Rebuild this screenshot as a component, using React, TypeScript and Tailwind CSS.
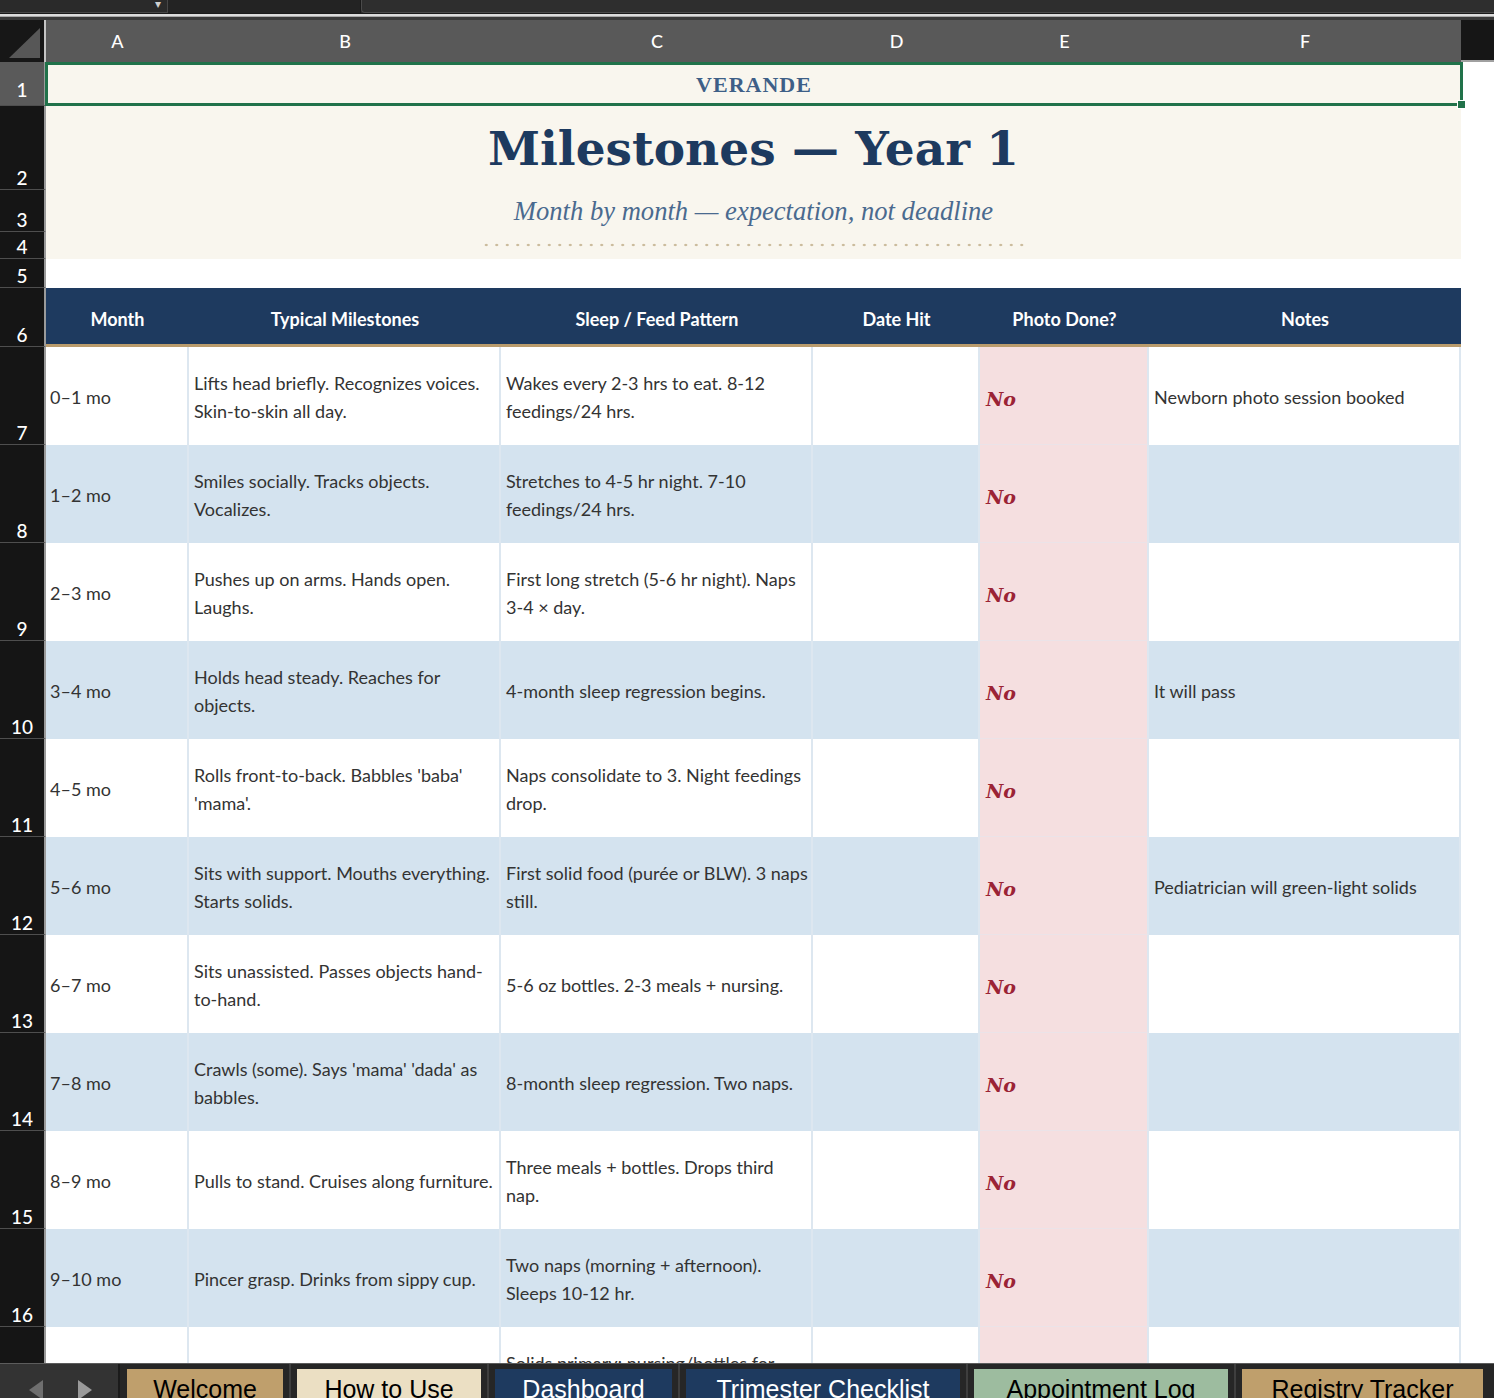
import React from "react";

const COLW = ["w-[143px]", "w-[312px]", "w-[312px]", "w-[167px]", "w-[169px]", "w-[312px]"];
const LETTERS = ["A", "B", "C", "D", "E", "F"];

type Row = { n: number; a: string; b: string[]; c: string[]; f: string };

const rows: Row[] = [
  { n: 7, a: "0–1 mo", b: ["Lifts head briefly. Recognizes voices.", "Skin-to-skin all day."], c: ["Wakes every 2-3 hrs to eat. 8-12", "feedings/24 hrs."], f: "Newborn photo session booked" },
  { n: 8, a: "1–2 mo", b: ["Smiles socially. Tracks objects.", "Vocalizes."], c: ["Stretches to 4-5 hr night. 7-10", "feedings/24 hrs."], f: "" },
  { n: 9, a: "2–3 mo", b: ["Pushes up on arms. Hands open.", "Laughs."], c: ["First long stretch (5-6 hr night). Naps", "3-4 × day."], f: "" },
  { n: 10, a: "3–4 mo", b: ["Holds head steady. Reaches for", "objects."], c: ["4-month sleep regression begins."], f: "It will pass" },
  { n: 11, a: "4–5 mo", b: ["Rolls front-to-back. Babbles 'baba'", "'mama'."], c: ["Naps consolidate to 3. Night feedings", "drop."], f: "" },
  { n: 12, a: "5–6 mo", b: ["Sits with support. Mouths everything.", "Starts solids."], c: ["First solid food (purée or BLW). 3 naps", "still."], f: "Pediatrician will green-light solids" },
  { n: 13, a: "6–7 mo", b: ["Sits unassisted. Passes objects hand-", "to-hand."], c: ["5-6 oz bottles. 2-3 meals + nursing."], f: "" },
  { n: 14, a: "7–8 mo", b: ["Crawls (some). Says 'mama' 'dada' as", "babbles."], c: ["8-month sleep regression. Two naps."], f: "" },
  { n: 15, a: "8–9 mo", b: ["Pulls to stand. Cruises along furniture."], c: ["Three meals + bottles. Drops third", "nap."], f: "" },
  { n: 16, a: "9–10 mo", b: ["Pincer grasp. Drinks from sippy cup."], c: ["Two naps (morning + afternoon).", "Sleeps 10-12 hr."], f: "" },
];

const sans = { fontFamily: "Lato, 'Open Sans', sans-serif" };

function RowHead({ n, h, sel = false, pb = "pb-0" }: { n?: number; h: string; sel?: boolean; pb?: string }) {
  return (
    <div
      className={`${h} w-[46px] shrink-0 flex items-end justify-center ${pb} border-r-2 border-b border-r-[#9a9a9a] border-b-[#4e4e4e] ${sel ? "bg-[#5a5a5a]" : "bg-[#151515]"} text-white text-[19px] leading-[22px] font-medium box-border`}
      style={sans}
    >
      {n ?? ""}
    </div>
  );
}

function Lines({ lines }: { lines: string[] }) {
  return (
    <div className="pt-[2px]">
      {lines.map((l, i) => (
        <div key={i} className="whitespace-nowrap">{l}</div>
      ))}
    </div>
  );
}

function DataRow({ r, idx }: { r: Row; idx: number }) {
  const bg = idx % 2 === 0 ? "bg-white" : "bg-[#d4e3ef]";
  const cell = `shrink-0 h-full flex items-center pl-[4px] border-r-2 border-[#dde7f0] box-border`;
  return (
    <div className="flex h-[98px] shrink-0">
      <RowHead n={r.n} h="h-[98px]" />
      <div className={`flex h-full ${bg} text-[18px] leading-[28px] text-[#333333]`} style={sans}>
        <div className={`${COLW[0]} ${cell}`}><Lines lines={[r.a]} /></div>
        <div className={`${COLW[1]} ${cell} pl-[5px]`}><Lines lines={r.b} /></div>
        <div className={`${COLW[2]} ${cell} pl-[5px]`}><Lines lines={r.c} /></div>
        <div className={`${COLW[3]} ${cell}`}></div>
        <div className={`${COLW[4]} ${cell} bg-[#f5dfe0] pl-[6px] border-b border-b-[#ebe3e8]`}>
          <span
            className="text-[19px] font-bold italic text-[#9b2335] pt-[6px]"
            style={{ fontFamily: "'DejaVu Serif', serif" }}
          >
            No
          </span>
        </div>
        <div className={`${COLW[5]} ${cell} pl-[5px]`}><Lines lines={r.f ? [r.f] : []} /></div>
      </div>
      <div className="flex-1 bg-white" />
    </div>
  );
}

export default function App() {
  return (
    <div className="w-[1494px] h-[1398px] flex flex-col overflow-hidden bg-white">
      {/* formula bar strip */}
      <div className="h-[20px] shrink-0 flex flex-col bg-[#1e1e1e]">
        <div className="h-[13px] flex bg-[#2c2c2c]">
          <div className="w-[168px] h-full bg-[#2a2a2a] border-r border-b border-[#474747] relative overflow-hidden">
            <span className="absolute right-[6px] top-[-5px] text-[12px] text-[#cfcfcf]">▾</span>
          </div>
          <div className="w-[193px] h-full bg-[#232323] border-r border-[#1a1a1a]" />
          <div className="flex-1 h-full bg-[#2e2e2e] border-l border-b border-[#4a4a4a] rounded-bl-[4px]" />
        </div>
        <div className="h-[1px] bg-[#1a1a1a]" />
        <div className="h-[2px] bg-[#dcdcdc]" />
        <div className="h-[1px] bg-[#a8a8a8]" />
        <div className="h-[3px] bg-[#3a3a3a]" />
      </div>

      {/* sheet */}
      <div className="flex-1 flex flex-col overflow-hidden">
        {/* column header */}
        <div className="h-[42px] shrink-0 flex">
          <div className="w-[46px] h-full bg-[#171717] border-r-2 border-[#c4c4c4] box-border relative">
            <svg className="absolute left-[9px] top-[8px]" width="31" height="30" viewBox="0 0 31 30">
              <polygon points="31,0 31,30 0,30" fill="#575757" />
            </svg>
          </div>
          {LETTERS.map((l, i) => (
            <div
              key={l}
              className={`${COLW[i]} shrink-0 h-full bg-[#595959] flex items-center justify-center text-white text-[18px] font-medium`}
              style={sans}
            >
              {l}
            </div>
          ))}
          <div className="flex-1 h-full bg-[#161616] border-b-2 border-[#a0a0a0] box-border" />
        </div>

        {/* rows 1-4: title band */}
        <div className="flex shrink-0">
          <div className="flex flex-col">
            <RowHead n={1} h="h-[44px]" sel pb="pb-[4px]" />
            <RowHead n={2} h="h-[84px]" />
            <RowHead n={3} h="h-[42px]" />
            <RowHead n={4} h="h-[27px]" />
          </div>
          <div className="w-[1415px] shrink-0 flex flex-col bg-[#f9f6ee]">
            <div className="h-[44px] w-[1418px] -ml-[1px] border-[3px] border-[#21724a] box-border flex items-center justify-center relative">
              <span
                className="text-[22px] font-bold tracking-[1px] text-[#3e5f87]"
                style={{ fontFamily: "'Liberation Serif', serif" }}
              >
                VERANDE
              </span>
              <div className="absolute right-[-6px] bottom-[-6px] w-[9px] h-[9px] bg-[#21724a] border border-white" />
            </div>
            <div className="h-[153px] flex flex-col items-center pt-[13px]">
              <div
                className="text-[47px] leading-[60px] font-bold text-[#1d3a5f] whitespace-nowrap"
                style={{ fontFamily: "'DejaVu Serif', serif" }}
              >
                Milestones — Year 1
              </div>
              <div
                className="mt-[16px] text-[26.6px] leading-[32px] italic text-[#4a6a8f] whitespace-nowrap"
                style={{ fontFamily: "'Liberation Serif', serif" }}
              >
                Month by month — expectation, not deadline
              </div>
              <div className="mt-[16px] h-[4px] w-[546px] bg-[radial-gradient(circle,#c9b999_1px,transparent_1.6px)] bg-[length:10.5px_4px]" />
            </div>
          </div>
          <div className="flex-1 bg-white" />
        </div>

        {/* row 5 */}
        <div className="flex h-[29px] shrink-0">
          <RowHead n={5} h="h-[29px]" />
          <div className="flex-1 bg-white" />
        </div>

        {/* row 6 header */}
        <div className="flex h-[59px] shrink-0">
          <RowHead n={6} h="h-[59px]" />
          <div className="flex h-full bg-[#1e3a5f] border-b-[3px] border-[#b99b6c] box-border text-white text-[18px] font-bold" style={sans}>
            {["Month", "Typical Milestones", "Sleep / Feed Pattern", "Date Hit", "Photo Done?", "Notes"].map((t, i) => (
              <div key={t} className={`${COLW[i]} shrink-0 h-full flex items-center justify-center pt-[7px]`}>
                {t}
              </div>
            ))}
          </div>
          <div className="flex-1 bg-white" />
        </div>

        {rows.map((r, i) => (
          <DataRow key={r.n} r={r} idx={i} />
        ))}

        {/* row 17 partial */}
        <div className="flex h-[98px] shrink-0">
          <RowHead h="h-[98px]" />
          <div className="flex h-full bg-white text-[18px] leading-[28px] text-[#333333]" style={sans}>
            <div className={`${COLW[0]} shrink-0 h-full border-r-2 border-[#dde7f0]`} />
            <div className={`${COLW[1]} shrink-0 h-full border-r-2 border-[#dde7f0]`} />
            <div className={`${COLW[2]} shrink-0 h-full border-r-2 border-[#dde7f0] flex items-center pl-[5px]`}>
              <Lines lines={["Solids primary; nursing/bottles for", "comfort."]} />
            </div>
            <div className={`${COLW[3]} shrink-0 h-full border-r-2 border-[#dde7f0]`} />
            <div className={`${COLW[4]} shrink-0 h-full border-r-2 border-[#dde7f0] bg-[#f5dfe0]`} />
            <div className={`${COLW[5]} shrink-0 h-full border-r-2 border-[#dde7f0]`} />
          </div>
          <div className="flex-1 bg-white" />
        </div>
      </div>

      {/* sheet tabs */}
      <div className="h-[35px] shrink-0 flex bg-[#262626] border-t border-[#5c5c5c]" style={{ fontFamily: "'Liberation Sans', Arial, sans-serif" }}>
        <div className="w-[120px] shrink-0 h-full bg-[#333333] border-r-2 border-[#1b1b1b] relative">
          <svg className="absolute left-[29px] top-[16px]" width="16" height="20" viewBox="0 0 16 20">
            <polygon points="14,0 14,20 0,10" fill="#6f6f6f" />
          </svg>
          <svg className="absolute left-[76px] top-[16px]" width="16" height="20" viewBox="0 0 16 20">
            <polygon points="2,0 2,20 16,10" fill="#9a9a9a" />
          </svg>
        </div>
        <div className="flex h-full pl-[7px] gap-[14px]">
          {[
            { t: "Welcome", w: "w-[156px]", c: "bg-[#bf9f6c] text-black" },
            { t: "How to Use", w: "w-[184px]", c: "bg-[#ebdfc3] text-black" },
            { t: "Dashboard", w: "w-[177px]", c: "bg-[#1e3a5f] text-white" },
            { t: "Trimester Checklist", w: "w-[274px]", c: "bg-[#1e3a5f] text-white" },
            { t: "Appointment Log", w: "w-[254px]", c: "bg-[#9dbc9f] text-black" },
            { t: "Registry Tracker", w: "w-[241px]", c: "bg-[#bf9f6c] text-black" },
          ].map((tab, i) => (
            <div key={tab.t} className="relative h-full">
              {i > 0 && <div className="absolute left-[-8px] top-0 h-full w-[2px] bg-[#3e3e3e]" />}
              <div className={`${tab.w} ${tab.c} mt-[5px] h-[30px] flex justify-center pt-[8px] text-[25px] leading-[25px] whitespace-nowrap`}>
                {tab.t}
              </div>
            </div>
          ))}
        </div>
      </div>
    </div>
  );
}
